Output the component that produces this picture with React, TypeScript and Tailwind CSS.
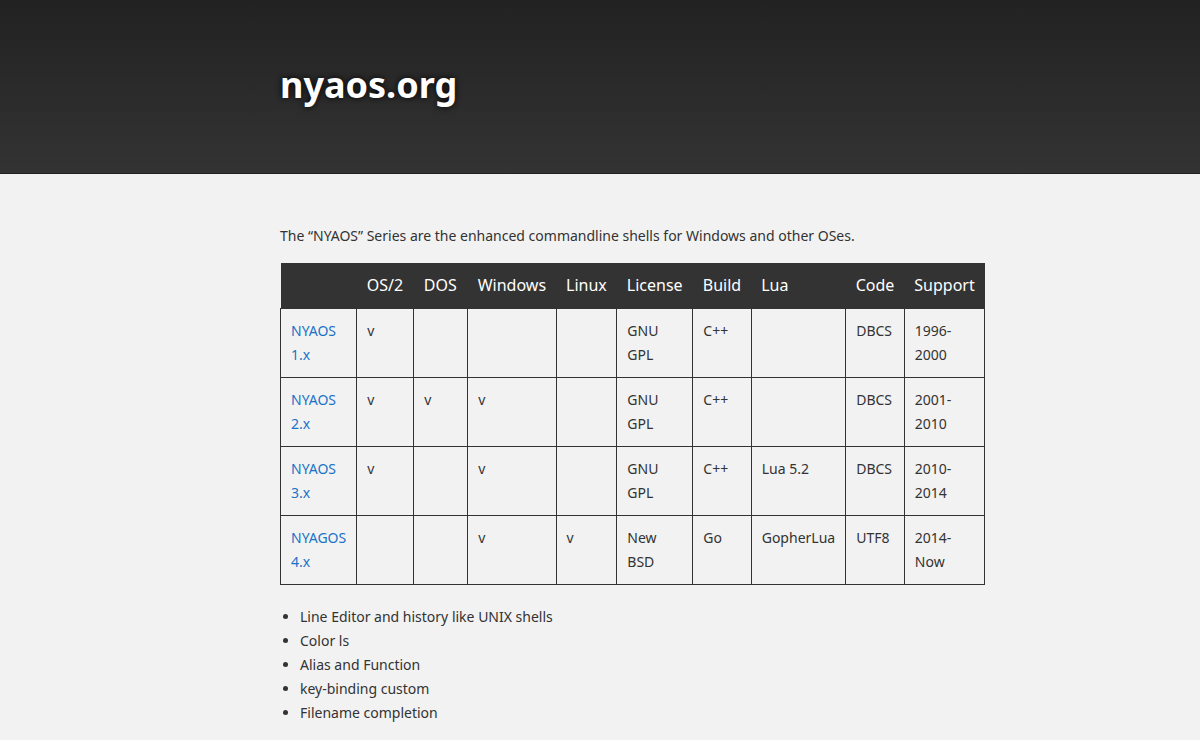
const cols = [
  { name: "", w: "w-[75px]" },
  { name: "OS/2", w: "w-[57px]" },
  { name: "DOS", w: "w-[54px]" },
  { name: "Windows", w: "w-[85px]" },
  { name: "Linux", w: "w-[58px]" },
  { name: "License", w: "w-[76px]" },
  { name: "Build", w: "w-[55px]" },
  { name: "Lua", w: "w-[93px]" },
  { name: "Code", w: "w-[57px]" },
  { name: "Support", w: "w-[78px]" },
];

const rows: string[][] = [
  ["NYAOS 1.x", "v", "", "", "", "GNU GPL", "C++", "", "DBCS", "1996- 2000"],
  ["NYAOS 2.x", "v", "v", "v", "", "GNU GPL", "C++", "", "DBCS", "2001- 2010"],
  ["NYAOS 3.x", "v", "", "v", "", "GNU GPL", "C++", "Lua 5.2", "DBCS", "2010- 2014"],
  ["NYAGOS 4.x", "", "", "v", "v", "New BSD", "Go", "GopherLua", "UTF8", "2014- Now"],
];

const features = [
  "Line Editor and history like UNIX shells",
  "Color ls",
  "Alias and Function",
  "key-binding custom",
  "Filename completion",
];

export default function App() {
  return (
    <div className="min-h-[740px] bg-[#f2f2f2] font-['Open_Sans',sans-serif] text-[14px] leading-[24px] text-[#333]">
      <header className="h-[174px] border-b border-[#222] bg-gradient-to-b from-[#222] to-[#333]">
        <div className="ml-[280px] pt-[61px]">
          <h1 className="text-[36px] font-bold leading-[48px] text-white [text-shadow:0_0_6px_#000]">
            nyaos.org
          </h1>
        </div>
      </header>
      <main className="ml-[280px] pt-[50px]">
        <p className="mb-[15px]">
          The “NYAOS” Series are the enhanced commandline shells for Windows and other OSes.
        </p>
        <table className="table-fixed border-collapse">
          <thead>
            <tr className="h-[45px] bg-[#333] text-left font-['Liberation_Sans',sans-serif] text-[16px] font-normal text-white">
              {cols.map((c, i) => (
                <th key={i} className={`${c.w} px-[10px] font-normal`}>
                  {c.name}
                </th>
              ))}
            </tr>
          </thead>
          <tbody>
            {rows.map((r) => (
              <tr key={r[0]} className="h-[69px]">
                {r.map((cell, i) => (
                  <td
                    key={i}
                    className={`border border-[#333] px-[10px] align-top pt-[10px] ${
                      i === 0 ? "text-[#1a73c8]" : ""
                    }`}
                  >
                    {cell}
                  </td>
                ))}
              </tr>
            ))}
          </tbody>
        </table>
        <ul className="mt-[20px] list-disc pl-[20px]">
          {features.map((f) => (
            <li key={f}>{f}</li>
          ))}
        </ul>
      </main>
    </div>
  );
}
